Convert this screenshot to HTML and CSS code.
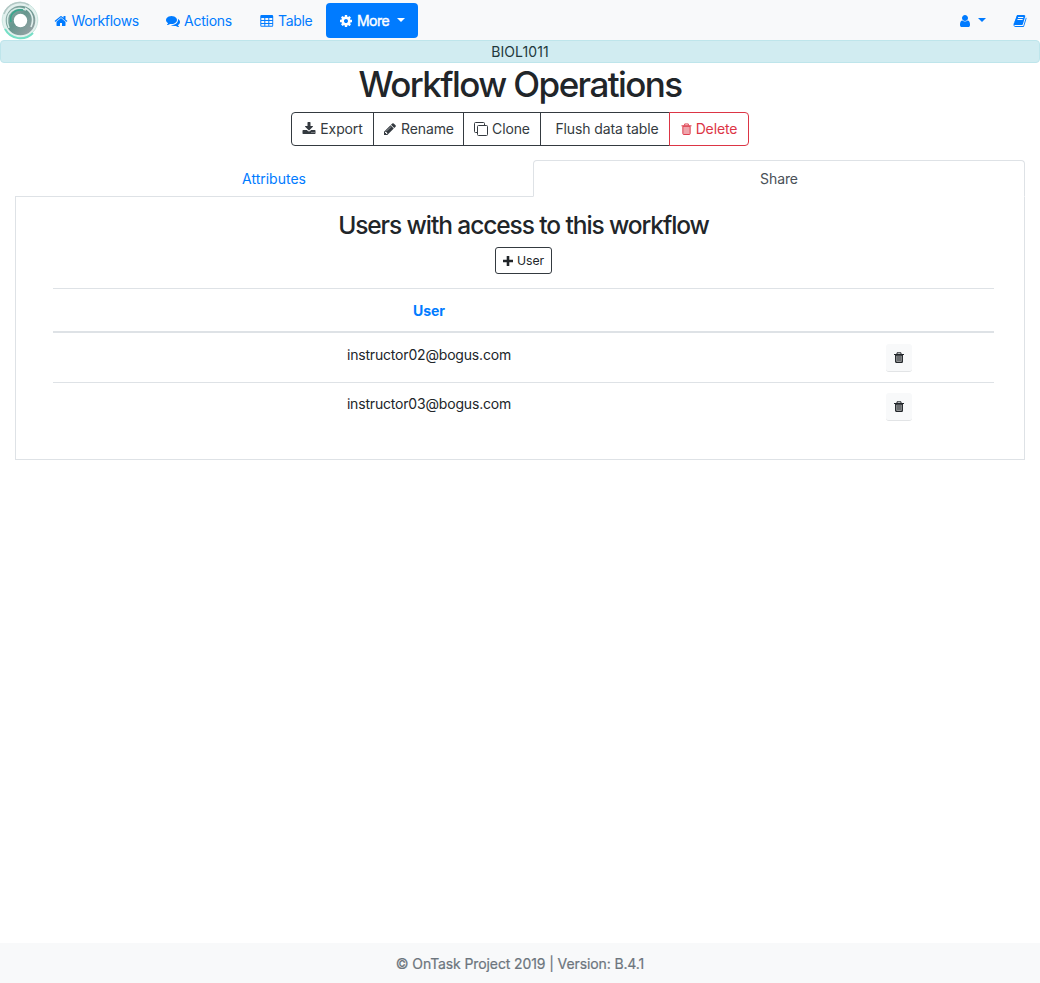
FILE: index.html
```html
<!DOCTYPE html>
<html lang="en">
<head>
<meta charset="utf-8">
<title>Workflow Operations</title>
<link rel="stylesheet" href="styles.css">
</head>
<body>
<nav class="navbar">
  <a class="brand"><svg width="40" height="40" viewBox="0 0 40 40"><defs><linearGradient id="g" x1="0" y1="0" x2="1" y2="1"><stop offset="0" stop-color="#9aaead"/><stop offset=".45" stop-color="#66978e"/><stop offset="1" stop-color="#a3a4aa"/></linearGradient></defs><circle cx="20" cy="20" r="17.8" fill="#e3f1ee" stroke="#c9e6df"/><circle cx="20.500" cy="20.500" r="14.800" fill="url(#g)"/><path d="M5 29A17.500 17.500 0 0 0 33 33" fill="none" stroke="#75dfc6" stroke-width="2"/><path d="M4 14A17 17 0 0 1 29 5" fill="none" stroke="#b3c8c5" stroke-width="1.500"/><path d="M9 28C3 12 16 5 26 10" fill="none" stroke="#d5ece6" stroke-width="1.500"/><path d="M25 8C33 12 34 20 31 27" fill="none" stroke="#e1efec" stroke-width="1.600"/><path d="M11 22C9 14 15 9 23 10" fill="none" stroke="#36a78c" stroke-width="1.500"/><circle cx="20.500" cy="20.500" r="6.700" fill="#fff"/></svg></a>
  <a class="nav-link workflows"><svg class="icon" viewBox="0 0 1792 1792"><path d="M1472 992v480q0 26-19 45t-45 19h-384v-384h-256v384h-384q-26 0-45-19t-19-45v-480q0-1 .5-3t.5-3l575-474 575 474q1 2 1 6zm223-69l-62 74q-8 9-21 11h-3q-13 0-21-7l-692-577-692 577q-12 8-24 7-13-2-21-11l-62-74q-8-10-7-23.500t11-21.500l719-599q32-26 76-26t76 26l244 204v-195q0-14 9-23t23-9h192q14 0 23 9t9 23v408l219 182q10 8 11 21.500t-7 23.500z"/></svg><span>Workflows</span></a>
  <a class="nav-link actions"><svg class="icon" viewBox="0 0 1792 1792"><path d="M1408 768q0 139-94 257t-256.500 186.500-353.500 68.500q-86 0-176-16-124 88-278 128-36 9-86 16h-3q-11 0-20.500-8t-11.500-21q-1-3-1-6.500t.5-6.500 2-6l2.500-5 3.500-5.500 4-5 4.500-5 4-4.500q5-6 23-25t26-29.500 22.500-29 25-38.500 20.500-44q-124-72-195-177t-71-224q0-139 94-257t256.500-186.500 353.500-68.500 353.500 68.500 256.500 186.500 94 257zm384 256q0 120-71 224.500t-195 176.500q10 24 20.500 44t25 38.500 22.500 29 26 29.500 23 25q1 1 4 4.500t4.500 5 4 5 3.500 5.500l2.500 5 2 6 .5 6.500-1 6.500q-3 14-13 22t-22 7q-50-7-86-16-154-40-278-128-90 16-176 16-271 0-472-132 58 4 88 4 161 0 309-45t264-129q125-92 192-212t67-254q0-77-23-152 129 71 204 178t75 230z"/></svg><span>Actions</span></a>
  <a class="nav-link table-link"><svg class="icon" viewBox="0 0 14 14"><path fill-rule="evenodd" d="M1.500 1h10.500q1.200 0 1.200 1.200v9.300q0 1.200-1.200 1.200h-10.500q-1.200 0-1.200-1.200v-9.300q0-1.200 1.200-1.200zM1.300 4v2h3V4zm4 0v2h3V4zm4 0v2h3V4zM1.300 7v2h3V7zm4 0v2h3V7zm4 0v2h3V7zM1.300 10v1.800h3V10zm4 0v1.800h3V10zm4 0v1.800h3V10z"/></svg><span>Table</span></a>
  <a class="nav-link more"><svg class="icon" viewBox="0 0 1792 1792"><path d="M1152 896q0-106-75-181t-181-75-181 75-75 181 75 181 181 75 181-75 75-181zm512-109v222q0 12-8 23t-20 13l-185 28q-19 54-39 91 35 50 107 138 10 12 10 25t-9 23q-27 37-99 108t-94 71q-12 0-26-9l-138-108q-44 23-91 38-16 136-29 186-7 28-36 28h-222q-14 0-24.500-8.500t-11.500-21.500l-28-184q-49-16-90-37l-141 107q-10 9-25 9-14 0-25-11-126-114-165-168-7-10-7-23 0-12 8-23 15-21 51-66.500t54-70.500q-27-50-41-99l-183-27q-13-2-21-12.500t-8-23.500v-222q0-12 8-23t19-13l186-28q14-46 39-92-40-57-107-138-10-12-10-24 0-10 9-23 26-36 98.500-107.500t94.500-71.500q13 0 26 10l138 107q44-23 91-38 16-136 29-186 7-28 36-28h222q14 0 24.500 8.500t11.500 21.500l28 184q49 16 90 37l142-107q9-9 24-9 13 0 25 10 129 119 165 170 7 8 7 22 0 12-8 23-15 21-51 66.500t-54 70.500q26 50 41 98l183 28q13 2 21 12.500t8 23.500z"/></svg><span>More</span><i class="caret"></i></a>
  <div class="nav-right">
    <a class="account"><svg class="icon" viewBox="0 0 1792 1792"><path d="M1536 1399q0 109-62.500 187t-150.500 78h-854q-88 0-150.500-78t-62.500-187q0-85 8.500-160.500t31.500-152 58.500-131 94-89 134.500-34.500q131 128 313 128t313-128q76 0 134.500 34.500t94 89 58.500 131 31.500 152 8.500 160.500zm-256-887q0 159-112.500 271.500t-271.500 112.500-271.500-112.500-112.500-271.500 112.500-271.500 271.500-112.500 271.500 112.500 112.500 271.500z"/></svg><i class="caret"></i></a>
    <a class="docs"><svg class="icon" viewBox="0 0 1792 1792"><path d="M1703 478q40 57 18 129l-275 906q-19 64-76.500 107.500t-122.500 43.500h-923q-77 0-148.500-53.500t-99.500-131.500q-24-67-2-127 0-4 3-27t4-37q1-8-3-21.500t-3-19.500q2-11 8-21t16.500-23.500 16.500-23.500q23-38 45-91.500t30-91.500q3-10 .5-30t-.5-28q3-11 17-28t17-23q21-36 42-92t25-90q1-9-2.500-32t.5-28q4-13 22-30.500t22-22.500q19-26 42.500-84.500t27.500-96.500q1-8-3-25.500t-2-26.500q2-8 9-18t18-23 17-21q8-12 16.500-30.500t15-35 16-36 19.500-32 26.500-23.500 36-11.500 47.500 5.500l-1 3q38-9 51-9h761q74 0 114 56t18 130l-274 906q-36 119-71.500 153.500t-128.500 34.500h-869q-27 0-38 15-11 16-1 43 24 70 144 70h923q29 0 56-15.500t35-41.500l300-987q7-22 5-57 38 15 59 43zm-1064 2q-4 13 2 22.500t20 9.500h608q13 0 25.500-9.500t16.500-22.500l21-64q4-13-2-22.500t-20-9.500h-608q-13 0-25.500 9.500t-16.500 22.500zm-83 256q-4 13 2 22.500t20 9.500h608q13 0 25.500-9.500t16.500-22.500l21-64q4-13-2-22.500t-20-9.500h-608q-13 0-25.500 9.500t-16.500 22.500z"/></svg></a>
  </div>
</nav>
<div class="workflow-name"><span>BIOL1011</span></div>
<main>
  <h1><span>Workflow Operations</span></h1>
  <div class="operations">
    <button class="op export"><svg class="icon" viewBox="0 0 1792 1792"><path d="M1344 1344q0-26-19-45t-45-19-45 19-19 45 19 45 45 19 45-19 19-45zm256 0q0-26-19-45t-45-19-45 19-19 45 19 45 45 19 45-19 19-45zm128-224v320q0 40-28 68t-68 28h-1472q-40 0-68-28t-28-68v-320q0-40 28-68t68-28h465l135 136q58 56 136 56t136-56l136-136h464q40 0 68 28t28 68zm-325-569q17 41-14 70l-448 448q-18 19-45 19t-45-19l-448-448q-31-29-14-70 17-39 59-39h256v-448q0-26 19-45t45-19h256q26 0 45 19t19 45v448h256q42 0 59 39z"/></svg><span>Export</span></button>
    <button class="op rename"><svg class="icon" viewBox="0 0 1792 1792"><path d="M491 1536l91-91-235-235-91 91v107h128v128h107zm523-928q0-22-22-22-10 0-17 7l-542 542q-7 7-7 17 0 22 22 22 10 0 17-7l542-542q7-7 7-17zm-54-192l416 416-832 832h-416v-416zm683 96q0 53-37 90l-166 166-416-416 166-165q36-38 90-38 53 0 91 38l235 234q37 39 37 91z"/></svg><span>Rename</span></button>
    <button class="op clone"><svg class="icon" viewBox="0 0 14 14"><path d="M3.500 10.500h-2q-1 0-1-1v-8q0-1 1-1h8q1 0 1 1v2M4.500 3.500h8q1 0 1 1v8q0 1-1 1h-8q-1 0-1-1v-8q0-1 1-1z" fill="none" stroke="currentColor"/></svg><span>Clone</span></button>
    <button class="op flush"><span>Flush data table</span></button>
    <button class="op delete"><svg class="icon" viewBox="0 0 12 14"><path d="M2 4h8v8q0 1-1 1H3q-1 0-1-1z" fill="currentColor" fill-opacity=".45" stroke="currentColor"/><path d="M.5 3.500h11M4 3V1.500h4V3" fill="none" stroke="currentColor"/></svg><span>Delete</span></button>
  </div>
  <div class="tabs"><a class="tab attributes"><span>Attributes</span></a><a class="tab share"><span>Share</span></a></div>
  <section class="panel">
    <h2><span>Users with access to this workflow</span></h2>
    <button class="add-user"><svg class="icon" viewBox="0 0 10 10"><path d="M3.700 0h2.600v3.700H10v2.600H6.300V10H3.700V6.300H0V3.700h3.700z"/></svg><span>User</span></button>
    <table>
      <thead><tr><th><span>User</span></th><th></th></tr></thead>
      <tbody>
        <tr><td><span class="email">instructor02@bogus.com</span></td><td><button class="remove"><svg class="icon" viewBox="0 0 10 11"><path d="M1.700 3h6.600v6.700q0 .6-.6.6H2.300q-.6 0-.6-.6z" fill="currentColor" fill-opacity=".3" stroke="currentColor" stroke-width="1.300"/><path d="M4 4v5M6 4v5M0 2.500h10M3 2V.8h4V2" fill="none" stroke="currentColor"/></svg></button></td></tr>
        <tr><td><span class="email">instructor03@bogus.com</span></td><td><button class="remove"><svg class="icon" viewBox="0 0 10 11"><path d="M1.700 3h6.600v6.700q0 .6-.6.6H2.300q-.6 0-.6-.6z" fill="currentColor" fill-opacity=".3" stroke="currentColor" stroke-width="1.300"/><path d="M4 4v5M6 4v5M0 2.500h10M3 2V.8h4V2" fill="none" stroke="currentColor"/></svg></button></td></tr>
      </tbody>
    </table>
  </section>
</main>
<footer><span>© OnTask Project 2019 | Version: B.4.1</span></footer>
</body>
</html>
```
FILE: styles.css
```css
* { box-sizing: border-box; }
body { margin: 0; min-height: 983px; display: flex; flex-direction: column; font: 14px/21px Inter, "Liberation Sans", sans-serif; color: #212529; background: #fff; }
button { font: inherit; color: inherit; margin: 0; }
.icon { display: block; width: 14px; height: 14px; fill: currentColor; flex: none; }
.navbar { height: 40px; display: flex; align-items: center; background: #f8f9fa; color: #007bff; padding-top: 1px; }
.brand { width: 40px; height: 40px; margin-top: -1px; background: #fff; }
.nav-link { display: flex; align-items: center; gap: 4px; height: 35px; white-space: nowrap; letter-spacing: -.25px; }
.workflows { width: 112px; padding-left: 13.5px; letter-spacing: -.32px; }
.actions { width: 94px; padding-left: 14px; }
.table-link { width: 80px; padding-left: 14px; letter-spacing: -.35px; }
.more { width: 92px; padding-left: 13px; background: #007bff; color: #fff; border-radius: 4px; letter-spacing: -.55px; }
.more span { -webkit-text-stroke: .4px; }
.caret { width: 0; height: 0; border: 4px solid transparent; border-top-color: currentColor; border-bottom: 0; margin-left: 4px; margin-top: -1px; }
.nav-right { margin-left: auto; display: flex; align-items: center; padding-right: 13.5px; gap: 27px; }
.account { display: flex; align-items: center; gap: 2px; }
.workflow-name { height: 23px; border: 1px solid #bee5eb; border-radius: 4px; background: #d1ecf1; color: #22383c; text-align: center; letter-spacing: .1px; }
main { padding: 0 15px; flex: 1; }
h1 { margin: 0 0 7px; height: 42px; font-size: 35px; line-height: 42px; font-weight: 500; text-align: center; white-space: nowrap; letter-spacing: -1.58px; }
.operations { display: flex; width: 458px; height: 34px; margin: 0 auto 14px; color: #343a40; }
.op { display: flex; align-items: center; justify-content: center; gap: 4px; border: 1px solid #343a40; background: #fff; padding: 0 0 1px; margin-left: -1px; white-space: nowrap; letter-spacing: -.12px; }
.export { width: 83px; margin-left: 0; border-radius: 4px 0 0 4px; }
.rename { width: 91px; }
.clone { width: 78px; }
.flush { width: 130px; padding-left: 4px; }
.delete { width: 80px; color: #dc3545; border-color: #dc3545; border-radius: 0 4px 4px 0; }
.delete .icon { width: 11px; }
.tabs { display: flex; height: 37px; text-align: center; line-height: 37px; }
.tab { border-bottom: 1px solid #dee2e6; }
.attributes { width: 518px; color: #007bff; }
.share { flex: 1; color: #495057; border: 1px solid #dee2e6; border-bottom-color: #fff; border-radius: 4px 4px 0 0; line-height: 35px; letter-spacing: -.1px; }
.panel { height: 263px; border: 1px solid #dee2e6; border-top: 0; padding: 13px 30px 0 37px; }
h2 { margin: 0 0 7px; font-size: 24.500px; line-height: 30px; height: 30px; font-weight: 500; text-align: center; white-space: nowrap; letter-spacing: -1.08px; }
.add-user { display: flex; align-items: center; justify-content: center; gap: 4px; width: 57px; height: 27px; margin: 0 auto 14px; padding: 0; border: 1px solid #343a40; border-radius: 3px; background: #fff; font-size: 12.250px; letter-spacing: -.1px; }
.add-user .icon { width: 10px; height: 10px; }
table { width: 941px; border-collapse: separate; border-spacing: 0; table-layout: fixed; text-align: center; }
th, td { padding: 0; border-top: 1px solid #dee2e6; }
th:first-child { width: 752px; }
th { height: 45px; border-bottom: 2px solid #dee2e6; color: #007bff; font-weight: 700; }
td { vertical-align: top; height: 49px; padding-top: 10px; }
tbody tr:first-child td { border-top: 0; padding-top: 11px; }
.email { letter-spacing: -.18px; }
.remove { display: flex; align-items: center; justify-content: center; width: 26px; height: 28px; padding: 0; border: 0; border-bottom: 1px solid #e2e4e6; border-radius: 3px; background: #f8f9fa; margin-left: 81px; }
.remove .icon { width: 10px; height: 11px; }
footer { height: 40px; background: #f8f9fa; color: #6c757d; text-align: center; line-height: 42px; }
footer span { -webkit-text-stroke: .2px; letter-spacing: -.11px; }
```
